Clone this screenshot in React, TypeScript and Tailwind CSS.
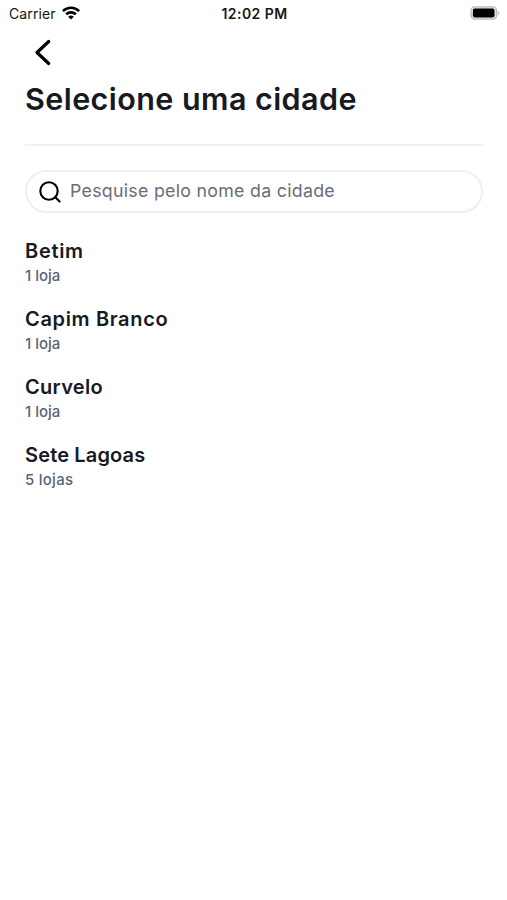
import React from 'react';

const cities = [
  { name: 'Betim', stores: '1 loja', nameClass: 'tracking-[0.7px]', storesClass: 'tracking-[0px]' },
  { name: 'Capim Branco', stores: '1 loja', nameClass: 'tracking-[0.65px]', storesClass: 'tracking-[0px]' },
  { name: 'Curvelo', stores: '1 loja', nameClass: 'tracking-[0.3px]', storesClass: 'tracking-[0px]' },
  { name: 'Sete Lagoas', stores: '5 lojas', nameClass: 'tracking-[0.15px]', storesClass: 'tracking-[0.25px]' },
];

const WifiIcon = () => (
  <svg width="18" height="14" viewBox="0 0 18 14" fill="none" stroke="#000" strokeWidth="2.6">
    <path d="M0.9 5.1C5.5 0.7 12.5 0.7 17.1 5.1" />
    <path d="M4.1 8.3C6.9 5.7 11.1 5.7 13.9 8.3" />
    <path d="M9 13.4L6.1 10.7C7.8 9.2 10.2 9.2 11.9 10.7Z" fill="#000" stroke="none" />
  </svg>
);

const BatteryIcon = () => (
  <svg width="30" height="14" viewBox="0 0 30 14">
    <rect x="1" y="0.9" width="25.6" height="12.2" rx="3.8" fill="#e4e4e4" stroke="#bcbcbc" strokeWidth="1.4" />
    <rect x="2.9" y="2.6" width="21.6" height="8.8" rx="1.8" fill="#000" />
    <path d="M27.8 4.8C29.8 5.6 29.8 8.4 27.8 9.2Z" fill="#bcbcbc" />
  </svg>
);

const StatusBar = () => (
  <div className="grid h-[26px] grid-cols-3 items-center pl-[9px] pr-[7px] text-[#161616]">
    <div className="flex items-center gap-[6px]">
      <span className="text-[14px] tracking-[0.1px]">Carrier</span>
      <WifiIcon />
    </div>
    <span className="text-center text-[14px] font-semibold tracking-[0.45px] whitespace-nowrap">12:02 PM</span>
    <div className="flex justify-end">
      <BatteryIcon />
    </div>
  </div>
);

export default function App() {
  return (
    <div className="min-h-[900px] w-full bg-white font-['Inter',sans-serif] text-[#171923]">
      <StatusBar />
      <div className="pr-6 pl-[25px]">
        <button className="mt-[13px] ml-[9px] block h-7 w-5" aria-label="Voltar">
          <svg width="20" height="28" viewBox="0 0 20 28" fill="none" stroke="#000" strokeWidth="3.2" strokeLinecap="round" strokeLinejoin="round">
            <path d="M14.7 2.5L3 13.5L14.7 24.5" />
          </svg>
        </button>
        <h1 className="mt-[11px] text-[30.5px] leading-[42px] font-semibold tracking-[0.43px] whitespace-nowrap">Selecione uma cidade</h1>
        <div className="mt-6 h-[2px] bg-[#f0f1f1]" />
        <div className="mt-6 flex h-[43px] items-center gap-[9px] rounded-full border-2 border-[#eeeff0] pl-3">
          <svg width="22" height="22" viewBox="0 0 22 22" fill="none" stroke="#000" strokeWidth="2.1" strokeLinecap="round">
            <circle cx="10" cy="10" r="8.7" />
            <path d="M16.3 16.3L20.6 20.6" />
          </svg>
          <span className="text-[17.75px] tracking-[0.29px] text-[#686d7c] whitespace-nowrap">Pesquise pelo nome da cidade</span>
        </div>
        <ul className="mt-6 flex flex-col gap-4">
          {cities.map((city) => (
            <li key={city.name} className="flex h-[52px] flex-col">
              <span className={`text-[20px] leading-[29px] font-semibold ${city.nameClass}`}>{city.name}</span>
              <span className={`text-[15px] leading-[20px] font-medium text-[#5b6278] ${city.storesClass}`}>{city.stores}</span>
            </li>
          ))}
        </ul>
      </div>
    </div>
  );
}
